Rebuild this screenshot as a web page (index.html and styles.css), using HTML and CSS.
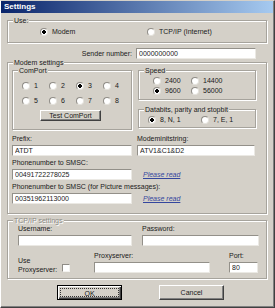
FILE: index.html
```html
<!DOCTYPE html>
<html lang="en">
<head>
    <meta charset="UTF-8">
    <title>Settings</title>
    <link rel="stylesheet" href="styles.css">
</head>
<body>
    <div class="window">
        <div class="titlebar">Settings</div>

        <div class="content">
            <!-- Connection type -->
            <div class="group use-group">
                <span class="caption">Use:</span>
                <label class="option modem-option"><input type="radio" name="use" checked>Modem</label>
                <label class="option"><input type="radio" name="use">TCP/IP (Internet)</label>
            </div>

            <div class="sender-row">
                <label for="sender">Sender number:</label>
                <input type="text" id="sender" class="field sender-field" value="0000000000">
            </div>

            <!-- Modem settings -->
            <div class="group modem-group">
                <span class="caption">Modem settings</span>

                <div class="modem-top">
                    <div class="group comport">
                        <span class="caption">ComPort</span>
                        <div class="port-grid">
                            <label class="option"><input type="radio" name="port">1</label>
                            <label class="option"><input type="radio" name="port">2</label>
                            <label class="option"><input type="radio" name="port" checked>3</label>
                            <label class="option"><input type="radio" name="port">4</label>
                            <label class="option"><input type="radio" name="port">5</label>
                            <label class="option"><input type="radio" name="port">6</label>
                            <label class="option"><input type="radio" name="port">7</label>
                            <label class="option"><input type="radio" name="port">8</label>
                        </div>
                        <button class="btn test-btn">Test ComPort</button>
                    </div>

                    <div class="right-col">
                        <div class="group speed">
                            <span class="caption">Speed</span>
                            <div class="speed-grid">
                                <label class="option"><input type="radio" name="speed">2400</label>
                                <label class="option"><input type="radio" name="speed">14400</label>
                                <label class="option"><input type="radio" name="speed" checked>9600</label>
                                <label class="option"><input type="radio" name="speed">56000</label>
                            </div>
                        </div>
                        <div class="group databits">
                            <span class="caption">Databits, parity and stopbit</span>
                            <div class="databits-row">
                                <label class="option bits-first"><input type="radio" name="bits" checked>8, N, 1</label>
                                <label class="option"><input type="radio" name="bits">7, E, 1</label>
                            </div>
                        </div>
                    </div>
                </div>

                <div class="field-grid">
                    <div class="field-block">
                        <label>Prefix:</label>
                        <input type="text" class="field" value="ATDT">
                    </div>
                    <div class="field-block">
                        <label>Modeminitstring:</label>
                        <input type="text" class="field" value="ATV1&amp;C1&amp;D2">
                    </div>
                    <div class="field-block">
                        <label>Phonenumber to SMSC:</label>
                        <input type="text" class="field" value="00491722278025">
                    </div>
                    <div class="field-block link-block">
                        <a href="#">Please read</a>
                    </div>
                    <div class="field-block">
                        <label class="wide-label">Phonenumber to SMSC (for Picture messages):</label>
                        <input type="text" class="field" value="00351962113000">
                    </div>
                    <div class="field-block link-block">
                        <a href="#">Please read</a>
                    </div>
                </div>
            </div>

            <!-- TCP/IP settings -->
            <div class="group tcp-group">
                <span class="caption disabled">TCP/IP settings</span>

                <div class="login-grid">
                    <div class="field-block">
                        <label>Username:</label>
                        <input type="text" class="field">
                    </div>
                    <div class="field-block">
                        <label>Password:</label>
                        <input type="password" class="field">
                    </div>
                </div>

                <div class="proxy-row">
                    <span class="proxy-label">Use<br>Proxyserver:</span>
                    <input type="checkbox" class="check">
                    <div class="field-block proxy-block">
                        <label>Proxyserver:</label>
                        <input type="text" class="field">
                    </div>
                    <div class="field-block port-block">
                        <label>Port:</label>
                        <input type="text" class="field" value="80">
                    </div>
                </div>
            </div>

            <div class="button-row">
                <button class="btn default-btn"><span>OK</span></button>
                <button class="btn">Cancel</button>
            </div>
        </div>
    </div>
</body>
</html>
```

FILE: styles.css
```css
* {
    box-sizing: border-box;
}

body {
    margin: 0;
    font-family: "Liberation Sans", Arial, sans-serif;
    font-size: 7px;
    line-height: 8px;
    color: #1a1a1a;
    background-color: #d4d0c8;
}

/* Window frame */
.window {
    width: 275px;
    height: 308px;
    background-color: #d4d0c8;
    border-top: 1px solid #d4d0c8;
    border-left: 1px solid #fff;
    border-right: 1px solid #404040;
    border-bottom: 1px solid #404040;
    box-shadow: inset -1px -1px 0 #808080;
}

.titlebar {
    height: 12px;
    margin-right: 1px;
    padding-left: 3px;
    font-size: 8px;
    font-weight: bold;
    line-height: 12px;
    color: #fff;
    background: linear-gradient(to right, #0a246a, #a6caf0);
}

.content {
    padding-left: 6px;
}

/* Group boxes */
.group {
    position: relative;
    border: 1px solid #a6a39c;
    box-shadow: inset 1px 1px 0 #fff, 1px 1px 0 #fff;
}

.caption {
    position: absolute;
    top: -5px;
    left: 5px;
    padding: 0 1px;
    line-height: 9px;
    background-color: #d4d0c8;
    white-space: nowrap;
}

.caption.disabled {
    color: #8c8a84;
    text-shadow: 1px 1px 0 #fff;
}

/* Radio options */
.option {
    display: flex;
    align-items: center;
    gap: 4px;
    height: 10px;
    white-space: nowrap;
}

input[type="radio"] {
    appearance: none;
    width: 8px;
    height: 8px;
    margin: 0;
    border-radius: 50%;
    border: 1px solid;
    border-color: #8f8c86 #e4e2dc #e4e2dc #8f8c86;
    background-color: #fff;
    flex-shrink: 0;
}

input[type="radio"]:checked {
    background: radial-gradient(circle, #000 0 1.6px, #fff 2px);
}

.check {
    appearance: none;
    width: 8px;
    height: 8px;
    margin: 12px 24px 0 4px;
    border: 1px solid;
    border-color: #8f8c86 #f4f3f0 #f4f3f0 #8f8c86;
    background-color: #fff;
}

/* Text fields */
.field {
    display: block;
    width: 100%;
    height: 11px;
    margin: 0;
    padding: 0 2px;
    font-family: inherit;
    font-size: 7px;
    color: #1a1a1a;
    border: 1px solid;
    border-color: #939089 #ebe9e4 #ebe9e4 #939089;
    background-color: #fff;
    outline: none;
}

/* Buttons */
.btn {
    display: block;
    height: 11px;
    padding: 0;
    font-family: inherit;
    font-size: 7px;
    color: #1a1a1a;
    background-color: #d4d0c8;
    border: 1px solid;
    border-color: #fff #404040 #404040 #fff;
    box-shadow: inset -1px -1px 0 #808080;
}

/* Use: */
.use-group {
    display: flex;
    align-items: center;
    width: 260px;
    height: 23px;
    margin-top: 7px;
    padding-left: 32px;
}

.modem-option {
    width: 107px;
}

.sender-row {
    display: flex;
    justify-content: flex-end;
    align-items: center;
    gap: 4px;
    width: 260px;
    margin-top: 5px;
    padding-right: 11px;
}

.sender-field {
    width: 120px;
}

/* Modem settings */
.modem-group {
    width: 260px;
    height: 152px;
    margin-top: 3px;
    padding: 7px 0 0 4px;
}

.modem-top {
    display: flex;
    gap: 6px;
}

.comport {
    width: 120px;
    height: 60px;
    padding: 10px 0 0 9px;
}

.port-grid {
    display: grid;
    grid-template-columns: repeat(4, 27px);
    row-gap: 5px;
}

.test-btn {
    width: 61px;
    margin: 4px 0 0 18px;
}

.right-col {
    width: 118px;
}

.speed {
    height: 30px;
    padding: 5px 0 0 14px;
}

.speed-grid {
    display: grid;
    grid-template-columns: 38px 38px;
}

.databits {
    height: 19px;
    margin-top: 9px;
    padding: 5px 0 0 9px;
}

.databits-row {
    display: flex;
}

.bits-first {
    width: 53px;
}

.field-grid {
    display: grid;
    grid-template-columns: 120px 118px;
    column-gap: 5px;
    margin-top: 5px;
}

.field-block label {
    display: block;
    height: 8px;
    margin-bottom: 2px;
}

.field-grid .field-block {
    margin-bottom: 3px;
}

.wide-label {
    white-space: nowrap;
}

.link-block {
    padding: 10px 0 0 6px;
}

.link-block a {
    display: block;
    line-height: 11px;
    font-style: italic;
    color: #34469e;
}

/* TCP/IP settings */
.tcp-group {
    width: 260px;
    height: 59px;
    margin-top: 6px;
    padding: 4px 0 0 10px;
}

.login-grid {
    display: grid;
    grid-template-columns: 114px 117px;
    column-gap: 10px;
}

.proxy-row {
    display: flex;
    align-items: flex-start;
    margin-top: 6px;
}

.proxy-label {
    width: 40px;
    margin-top: 4px;
    line-height: 9px;
}

.proxy-block {
    width: 116px;
}

.port-block {
    width: 29px;
    margin-left: 19px;
}

/* Dialog buttons */
.button-row {
    display: flex;
    gap: 37px;
    margin-top: 6px;
    padding-left: 50px;
}

.button-row .btn {
    width: 65px;
    height: 15px;
}

.default-btn {
    border-color: #000;
    box-shadow: inset 1px 1px 0 #fff, inset -1px -1px 0 #404040, inset -2px -2px 0 #808080;
    padding: 2px;
}

.default-btn span {
    display: block;
    height: 100%;
    line-height: 9px;
    border: 1px dotted #333;
}
```
